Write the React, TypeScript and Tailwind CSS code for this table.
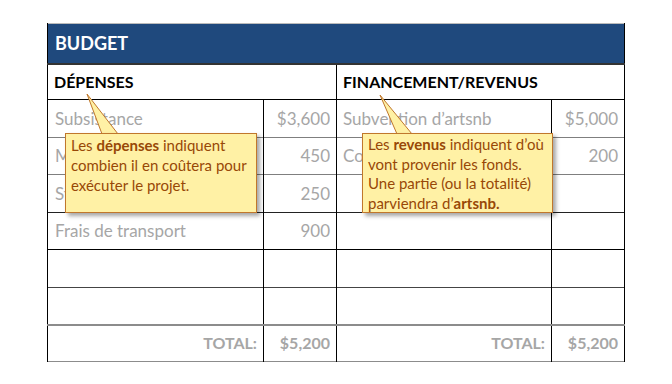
import React from "react";

const font = { fontFamily: "Lato, 'Open Sans', 'Liberation Sans', sans-serif" };

const leftRows = [
  { label: "Subsistance", amount: "$3,600" },
  { label: "Matériel", amount: "450" },
  { label: "Studio", amount: "250" },
  { label: "Frais de transport", amount: "900" },
  { label: "", amount: "" },
  { label: "", amount: "" },
];

const rightRows = [
  { label: "Subvention d’artsnb", amount: "$5,000" },
  { label: "Contributions", amount: "200" },
  { label: "", amount: "" },
  { label: "", amount: "" },
  { label: "", amount: "" },
  { label: "", amount: "" },
];

// bottom border of each data row, top to bottom
const rowBorders = [
  "border-b border-b-[#7f7f7f]",
  "border-b border-b-[#7f7f7f]",
  "border-b border-b-[#222]",
  "border-b border-b-black",
  "border-b border-b-[#444]",
  "border-b-2 border-b-[#8c8c8c]",
];

function Callout({ className, tail, children }: { className: string; tail: string; children: React.ReactNode }) {
  return (
    <div className={`absolute ${className}`}>
      <svg className="absolute left-0 top-0 overflow-visible" width="1" height="1">
        <polygon points={tail} fill="#fff1a5" stroke="#c0772c" strokeWidth="1" />
      </svg>
      <div className="relative h-full w-full border border-[#c0772c] bg-[#fff1a5] px-[5px] pt-[1px] text-[15px] leading-[20px] text-[#984807] shadow-[3px_3px_4px_rgba(0,0,0,0.35)]">
        {children}
      </div>
    </div>
  );
}

export default function App() {
  return (
    <div className="relative h-[384px] w-[672px] bg-white" style={font}>
      <div className="ml-[47px] pt-[23px]">
        <table className="w-[577px] table-fixed border-collapse">
          <colgroup>
            <col className="w-[216px]" />
            <col className="w-[73px]" />
            <col className="w-[215px]" />
            <col className="w-[73px]" />
          </colgroup>
          <tbody>
            <tr className="h-[40px] border-t border-t-[#bbb] border-b-2 border-b-[#333] bg-[#1f497d]">
              <td colSpan={4} className="border-x border-x-black px-[7px] text-[18px] font-bold text-white">
                BUDGET
              </td>
            </tr>
            <tr className="h-[36px] border-b border-b-black">
              <td colSpan={2} className="border-l border-l-black px-[6px] text-[16px] font-bold text-black">
                DÉPENSES
              </td>
              <td colSpan={2} className="border-x border-x-black px-[6px] text-[16px] font-bold text-black">
                FINANCEMENT/REVENUS
              </td>
            </tr>
            {leftRows.map((row, i) => (
              <tr key={i} className={`h-[37.5px] ${rowBorders[i]}`}>
                <td className="border-l border-l-black px-[7px] text-[17px] text-[#a6a6a6]">{row.label}</td>
                <td className="border-l border-l-black px-[6px] text-right text-[17px] text-[#a6a6a6]">{row.amount}</td>
                <td className="border-l border-l-black px-[6px] text-[17px] text-[#a6a6a6]">{rightRows[i].label}</td>
                <td className="border-x border-x-black px-[6px] text-right text-[17px] text-[#a6a6a6]">{rightRows[i].amount}</td>
              </tr>
            ))}
            <tr className="h-[37px] border-b border-b-[#8c8c8c]">
              <td className="border-l border-l-black px-[6px] text-right text-[16px] font-bold text-[#a6a6a6]">TOTAL:</td>
              <td className="border-l border-l-black px-[6px] text-right text-[16px] font-bold text-[#a6a6a6]">$5,200</td>
              <td className="border-l border-l-black px-[6px] text-right text-[16px] font-bold text-[#a6a6a6]">TOTAL:</td>
              <td className="border-x border-x-black px-[6px] text-right text-[16px] font-bold text-[#a6a6a6]">$5,200</td>
            </tr>
          </tbody>
        </table>
      </div>

      <Callout className="left-[65px] top-[133px] h-[80px] w-[192px]" tail="22,-39 37,1 53,1">
        Les <b>dépenses</b> indiquent
        <br />
        combien il en coûtera pour
        <br />
        exécuter le projet.
      </Callout>

      <Callout className="left-[362px] top-[133px] h-[80px] w-[191px]" tail="18,-38 35,1 50,1">
        <div className="leading-[19.5px]">
          Les <b>revenus</b> indiquent d’où
          <br />
          vont provenir les fonds.
          <br />
          Une partie (ou la totalité)
          <br />
          parviendra d’<b>artsnb.</b>
        </div>
      </Callout>
    </div>
  );
}
